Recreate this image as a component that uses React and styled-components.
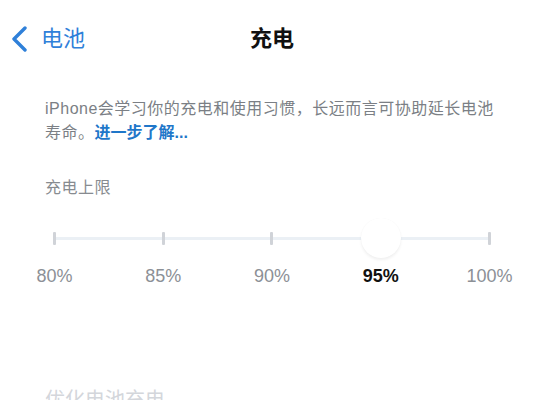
import React from "react";
import styled, { createGlobalStyle } from "styled-components";

const Global = createGlobalStyle`
  html, body { margin: 0; padding: 0; background: #ffffff; }
  body {
    font-family: "Liberation Sans", "Noto Sans CJK SC", sans-serif;
    -webkit-font-smoothing: antialiased;
  }
`;

const Page = styled.div`
  width: 544px;
  height: 400px;
  overflow: hidden;
  display: flex;
  flex-direction: column;
  background: #fff;
  & > * { flex-shrink: 0; }
`;

const Nav = styled.div`
  height: 74px;
  padding-top: 2px;
  display: grid;
  grid-template-columns: 1fr auto 1fr;
  align-items: center;
`;

const Back = styled.div`
  display: flex;
  align-items: center;
  gap: 12px;
  padding-left: 11px;
  color: #2f80d9;
  font-size: 22px;
  line-height: 24px;
`;

const Title = styled.div`
  font-size: 22px;
  font-weight: 700;
  color: #111;
  line-height: 24px;
`;

const Description = styled.p`
  margin: 21px 45px 0 45px;
  font-size: 16px;
  letter-spacing: 0.5px;
  line-height: 24px;
  color: #7b7f85;
`;

const Link = styled.span`
  color: #1f77c9;
  font-weight: 700;
  letter-spacing: 0;
`;

const SectionLabel = styled.div`
  margin: 31px 0 0 45px;
  font-size: 16px;
  letter-spacing: 0.5px;
  line-height: 24px;
  color: #878b90;
`;

const SliderArea = styled.div`
  position: relative;
  margin-top: 18px;
  height: 40px;
  display: grid;
  grid-template-columns: repeat(5, 1fr);
  &::before {
    content: "";
    position: absolute;
    left: 10%;
    right: 10%;
    top: 19px;
    height: 3px;
    background: #ebf0f5;
  }
`;

const Stop = styled.div`
  position: relative;
  display: flex;
  align-items: center;
  justify-content: center;
`;

const Tick = styled.div`
  position: relative;
  width: 3px;
  height: 13px;
  border-radius: 1px;
  background: #d0d3d8;
`;

const Thumb = styled.div`
  position: absolute;
  left: 50%;
  top: 50%;
  width: 40px;
  height: 40px;
  margin: -20px 0 0 -20px;
  border-radius: 50%;
  background: #fff;
  box-shadow: 0 2px 3px rgba(0, 0, 0, 0.06), 0 0 1px rgba(0, 0, 0, 0.04);
`;

const Labels = styled.div`
  margin-top: 6px;
  display: grid;
  grid-template-columns: repeat(5, 1fr);
`;

const Label = styled.div`
  text-align: center;
  font-size: 18px;
  line-height: 24px;
  color: ${(p) => (p.$active ? "#111" : "#8c9096")};
  font-weight: ${(p) => (p.$active ? 700 : 400)};
`;

const Faded = styled.div`
  margin: 100px 0 0 45px;
  font-size: 20px;
  line-height: 24px;
  color: #d3d6db;
`;

const stops = ["80%", "85%", "90%", "95%", "100%"];
const active = 3;

export default function App() {
  return (
    <>
      <Global />
      <Page>
        <Nav>
          <Back>
            <svg width="18" height="26" viewBox="0 0 18 26">
              <polyline
                points="14,2 3,13 14,24"
                fill="none"
                stroke="#2f80d9"
                strokeWidth="3.4"
                strokeLinecap="round"
                strokeLinejoin="round"
              />
            </svg>
            <span>电池</span>
          </Back>
          <Title>充电</Title>
          <div />
        </Nav>
        <Description>
          iPhone会学习你的充电和使用习惯，长远而言可协助延长电池寿命。
          <Link>进一步了解...</Link>
        </Description>
        <SectionLabel>充电上限</SectionLabel>
        <SliderArea>
          {stops.map((s, i) => (
            <Stop key={s}>
              {i === active ? <Thumb /> : <Tick />}
            </Stop>
          ))}
        </SliderArea>
        <Labels>
          {stops.map((s, i) => (
            <Label key={s} $active={i === active}>
              {s}
            </Label>
          ))}
        </Labels>
        <Faded>优化电池充电</Faded>
      </Page>
    </>
  );
}
